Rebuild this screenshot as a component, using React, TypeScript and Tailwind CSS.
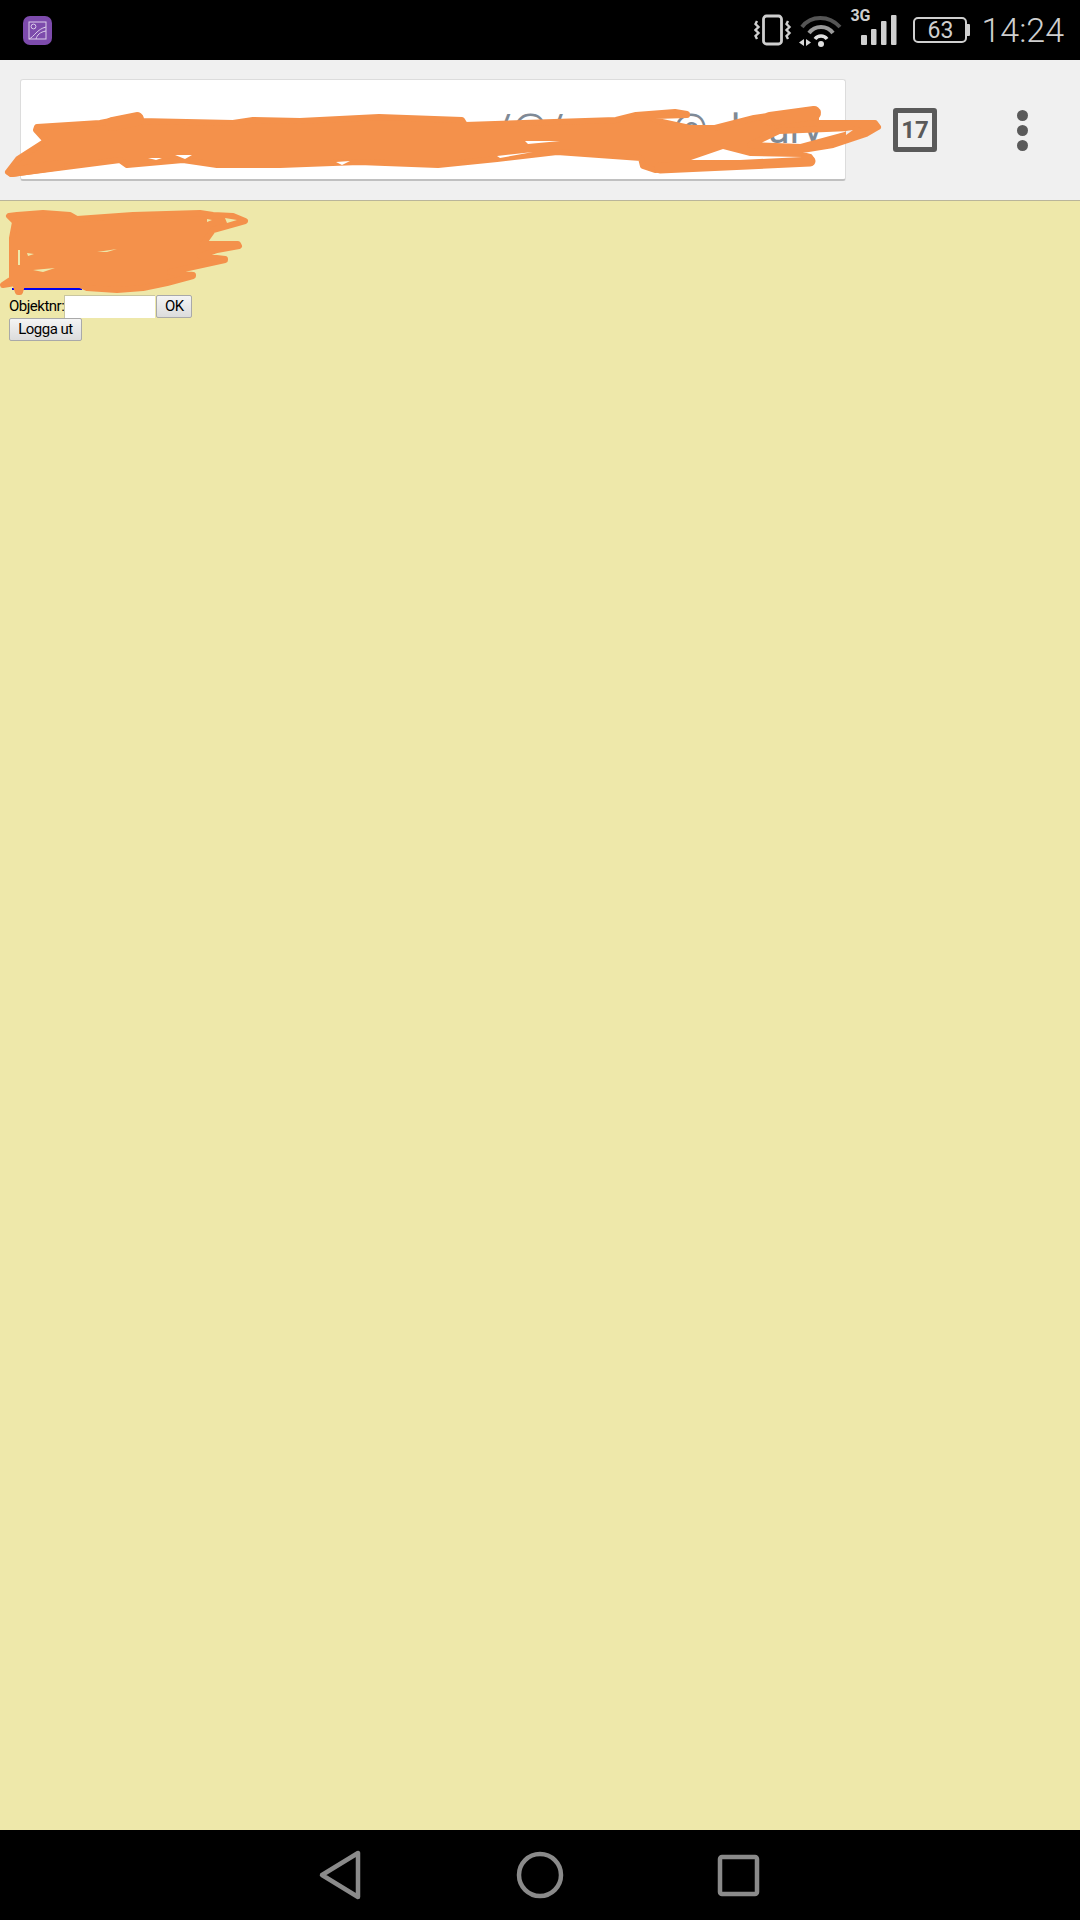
const ORANGE = '#f4914b';

function StatusBar() {
  return (
    <div className="h-[60px] bg-black flex items-center justify-between shrink-0 pl-[23px] pr-[16px]">
      <div className="w-[29px] h-[29px] rounded-[7px] bg-[#7d4bac] flex items-center justify-center">
        <svg width="19" height="19" viewBox="0 0 19 19" fill="none" stroke="#dccdea" strokeWidth="1">
          <rect x="1" y="1" width="17" height="17" />
          <circle cx="5.5" cy="5.5" r="2.4" />
          <path d="M1 18 C 6 16, 9 8, 18 6" />
          <path d="M8 18 C 9 14, 12 11, 18 10" />
        </svg>
      </div>
      <div className="flex items-center text-[#cfcfcf] font-['Roboto',sans-serif]">
        <svg width="38" height="34" viewBox="0 0 38 34" fill="none" stroke="#cfcfcf" className="mr-[5px]">
          <rect x="9.5" y="3" width="18" height="28" rx="3" strokeWidth="2.8" />
          <path d="M3 8 L1.5 11 L4.5 14 L1.5 17 L4.5 20 L1.5 23 L3 26" strokeWidth="2.4" />
          <path d="M34 8 L32.5 11 L35.5 14 L32.5 17 L35.5 20 L32.5 23 L34 26" strokeWidth="2.4" />
        </svg>
        <svg width="48" height="34" viewBox="0 0 48 34" fill="none" className="mr-[4px]">
          <path d="M5 14 C 14 2, 32 2, 43 14" stroke="#555555" strokeWidth="4" />
          <path d="M12 20 C 18 12, 30 12, 36 20" stroke="#9a9a9a" strokeWidth="4" />
          <path d="M18 26 C 21 22, 27 22, 30 26" stroke="#e0e0e0" strokeWidth="3.5" />
          <circle cx="24" cy="31" r="3" fill="#e0e0e0" />
          <path d="M7 26 L7 33 L2 29.5 Z" fill="#d8d8d8" />
          <path d="M9 26 L9 33 L14 29.5 Z" fill="#d8d8d8" />
        </svg>
        <div className="relative w-[48px] h-[34px] mr-[16px]">
          <span className="absolute left-[1px] top-[-7px] text-[16px] font-bold leading-[20px]">3G</span>
          <svg width="48" height="34" viewBox="0 0 48 34" className="absolute left-0 top-0">
            <rect x="12" y="22" width="6" height="10" rx="1" fill="#cfcfcf" />
            <rect x="22" y="16" width="5.5" height="16" rx="1" fill="#cfcfcf" />
            <rect x="32" y="8" width="5.5" height="24" rx="1" fill="#cfcfcf" />
            <rect x="42" y="2" width="5.5" height="30" rx="1" fill="#cfcfcf" />
          </svg>
        </div>
        <div className="flex items-center mr-[11px]">
          <div className="w-[54px] h-[26px] border-2 border-[#cfcfcf] rounded-[5px] flex items-center justify-center text-[23px] leading-none font-normal">
            63
          </div>
          <div className="w-[3px] h-[12px] bg-[#cfcfcf] rounded-r-[1px]" />
        </div>
        <span className="text-[34px] font-light leading-none">14:24</span>
      </div>
    </div>
  );
}

function Toolbar() {
  return (
    <div className="h-[141px] bg-[#f0f0f0] border-b border-[#b9b59a] shrink-0 flex items-center pl-[20px]">
      <div className="w-[826px] h-[102px] bg-white rounded-[3px] border border-[#dcdcdc] border-b-2 border-b-[#c0c0c0] flex items-center overflow-hidden font-['Roboto',sans-serif] text-[40px] leading-none text-[#7f8a96] whitespace-nowrap">
        <span className="ml-[474px]">/@/</span>
        <span className="ml-[108px]">@</span>
        <span className="ml-[23px]">l</span>
        <span className="ml-[27px]">ury</span>
      </div>
      <div className="ml-[47px] w-[44px] h-[44px] border-[5px] border-[#5a5a5a] rounded-[3px] flex items-center justify-center text-[#5a5a5a] font-['Roboto',sans-serif] font-bold text-[24px] leading-none">
        17
      </div>
      <div className="ml-[80px] flex flex-col gap-[4px]">
        <div className="w-[11px] h-[11px] rounded-full bg-[#5a5a5a]" />
        <div className="w-[11px] h-[11px] rounded-full bg-[#5a5a5a]" />
        <div className="w-[11px] h-[11px] rounded-full bg-[#5a5a5a]" />
      </div>
    </div>
  );
}

function Page() {
  return (
    <div className="flex-1 bg-[#eee8aa] pl-[9px] pt-[87px] font-['Roboto',sans-serif] text-[15px] tracking-[-0.5px] leading-[23px] text-black">
      <div className="w-[70px] h-[2px] ml-[3px] mb-[5px] bg-[#0000ee]" />
      <div className="flex items-center h-[23px]">
        <span>Objektnr:</span>
        <input className="w-[91px] h-[23px] bg-white border-t border-l border-[#c9c6a0] outline-none" />
        <button className="ml-[1px] w-[36px] h-[23px] rounded-[2px] border border-[#a9a9a9] bg-gradient-to-b from-[#f4f4f4] to-[#dcdcdc] flex items-center justify-center">
          OK
        </button>
      </div>
      <button className="w-[73px] h-[23px] rounded-[2px] border border-[#a9a9a9] bg-gradient-to-b from-[#f4f4f4] to-[#dcdcdc] flex items-center justify-center">
        Logga ut
      </button>
    </div>
  );
}

function NavBar() {
  return (
    <div className="h-[90px] bg-black shrink-0 flex items-center justify-center gap-[150px]">
      <svg width="48" height="52" viewBox="0 0 48 52" fill="none" stroke="#8a8a8a" strokeWidth="4.5" strokeLinejoin="round">
        <path d="M4 26 L40 4 L40 48 Z" />
      </svg>
      <svg width="48" height="48" viewBox="0 0 48 48" fill="none" stroke="#8a8a8a" strokeWidth="4.5">
        <circle cx="24" cy="24" r="21" />
      </svg>
      <svg width="48" height="48" viewBox="0 0 48 48" fill="none" stroke="#8a8a8a" strokeWidth="4.5" strokeLinejoin="round">
        <rect x="6" y="6" width="37" height="37" rx="2" />
      </svg>
    </div>
  );
}

// the orange marker strokes that were painted over the screenshot
function Scribbles() {
  return (
    <svg width="1080" height="1920" viewBox="0 0 1080 1920" className="absolute left-0 top-0 pointer-events-none">
      <g fill={ORANGE} stroke={ORANGE} strokeWidth="6" strokeLinejoin="round" strokeLinecap="round">
        <path
          fillRule="evenodd"
          d="M8 172 L18 159 L46 141 L36 130 L37 127 L100 123 L137 116 L140 121 L233 123 L253 120 L300 121 L379 117 L462 120 L465 125 L616 120 L636 115 L675 112 L687 114 L687 115 L655 116 L652 118 L662 122 L690 128 L715 128 L754 118 L812 110 L816 114 L816 123 L875 123 L878 127 L866 134 L833 145 L790 152 L810 157 L812 161 L754 165 L655 170 L643 166 L641 158 L557 152 L497 159 L438 165 L359 162 L280 165 L217 165 L183 160 L127 165 L120 160 L11 174 Z M750 145 L779 131 L850 128 L860 131 L801 147 Z"
        />
        <path fill="none" strokeWidth="14" d="M112 124 L137 119" />
        <path fill="none" strokeWidth="14" d="M770 119 L814 113" />
        <path fill="none" strokeWidth="11" d="M660 168 L810 161" />
        <path fill="none" strokeWidth="10" d="M12 172 L60 165" />
        <path d="M9 216 L17 215 L43 213 L70 215 L77 219 L133 215 L200 213 L213 215 L233 216 L245 221 L238 223 L213 230 L203 244 L238 244 L239 246 L217 250 L200 256 L225 259 L225 260 L170 272 L193 275 L193 276 L167 283 L143 288 L117 290 L87 288 L80 285 L22 285 L20 292 L18 292 L15 283 L3 285 L12 279 L12 238 L15 222 Z" />
      </g>
      <path fill="#ffffff" d="M691 160 L723 149 L750 156 L802 157 L740 160 Z" />
      <path fill="#f0f0f0" d="M846 131 L853 130 L846 135 Z" />
      <path fill="#ffffff" d="M336 162 L350 161 L342 165 Z" />
      <path fill="#ffffff" d="M497 156 L533 152 L500 158 Z" />
      <path fill="#ffffff" d="M525 141 L560 141 L528 144 Z" />
      <path fill="#ffffff" d="M148 158 L162 158 L156 160 Z" />
      <path fill="#ffffff" d="M175 155 L192 155 L185 159 Z" />
      <path fill="#eee8aa" d="M33 270 L55 268 L43 272 Z" />
      <path fill="#eee8aa" d="M97 252 L117 249 L107 252 Z" />
      <path fill="#eee8aa" d="M18 250 L20 250 L20 265 L18 265 Z" />
      <path fill="#eee8aa" d="M27 253 L34 254 L28 256 Z" />
      <path fill="#eee8aa" d="M225 218 L237 220 L227 223 Z" />
      <path fill="#eee8aa" d="M207 219 L212 220 L207 222 Z" />
    </svg>
  );
}

export default function App() {
  return (
    <div className="relative w-[1080px] h-[1920px] overflow-hidden flex flex-col">
      <StatusBar />
      <Toolbar />
      <Page />
      <NavBar />
      <Scribbles />
    </div>
  );
}
